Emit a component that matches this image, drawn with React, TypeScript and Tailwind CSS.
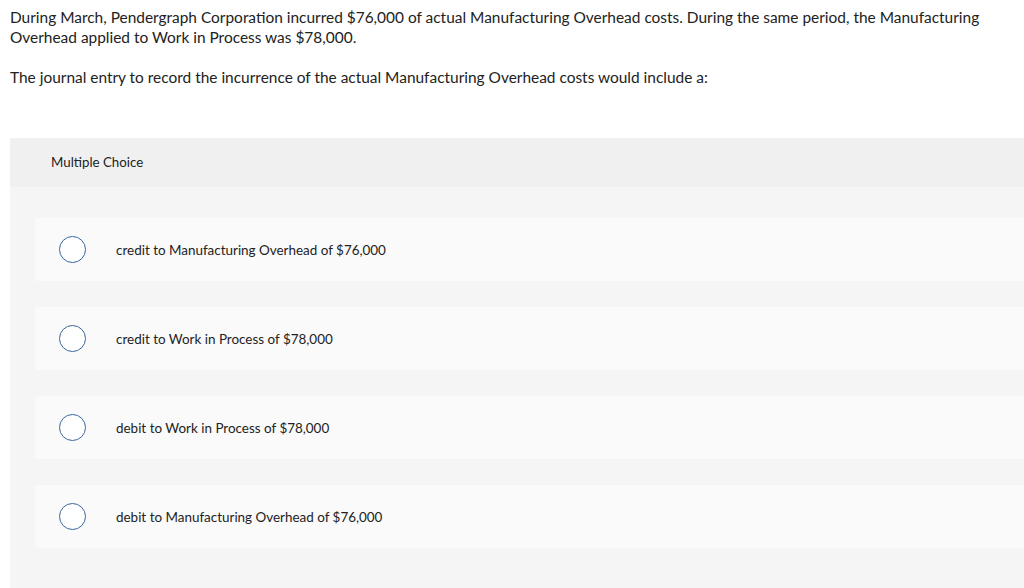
const options = [
  "credit to Manufacturing Overhead of $76,000",
  "credit to Work in Process of $78,000",
  "debit to Work in Process of $78,000",
  "debit to Manufacturing Overhead of $76,000",
];

export default function App() {
  return (
    <div
      className="w-[1024px] h-[588px] overflow-hidden bg-white text-[#222]"
      style={{ fontFamily: "Lato, 'Open Sans', sans-serif" }}
    >
      {/* Question */}
      <div className="pl-[10px] pr-4 pt-[7px] text-[15.45px] leading-[20px]">
        <p>
          During March, Pendergraph Corporation incurred $76,000 of actual Manufacturing Overhead costs. During the
          same period, the Manufacturing Overhead applied to Work in Process was $78,000.
        </p>
        <p className="mt-[20px]">
          The journal entry to record the incurrence of the actual Manufacturing Overhead costs would include a:
        </p>
      </div>

      {/* Answer box */}
      <div className="ml-[10px] mt-[51px] w-[1030px] h-[460px] bg-[#f5f5f5]">
        <div className="h-[49px] bg-[#f0f0f0] pl-[41px] pt-[1px] flex items-center text-[13.3px] text-[#222]">
          Multiple Choice
        </div>
        <div className="pl-[25px] pt-[31px] flex flex-col gap-[26px]">
          {options.map((o) => (
            <div
              key={o}
              className="h-[63px] bg-[#fafafa] rounded-[3px] flex items-center pl-[24px]"
            >
              <div className="w-[27px] h-[27px] rounded-full border-[1.5px] border-[#3a659b] bg-white shrink-0" />
              <span className="ml-[30px] pt-[2px] text-[13.45px] text-[#222]">{o}</span>
            </div>
          ))}
        </div>
      </div>
    </div>
  );
}
